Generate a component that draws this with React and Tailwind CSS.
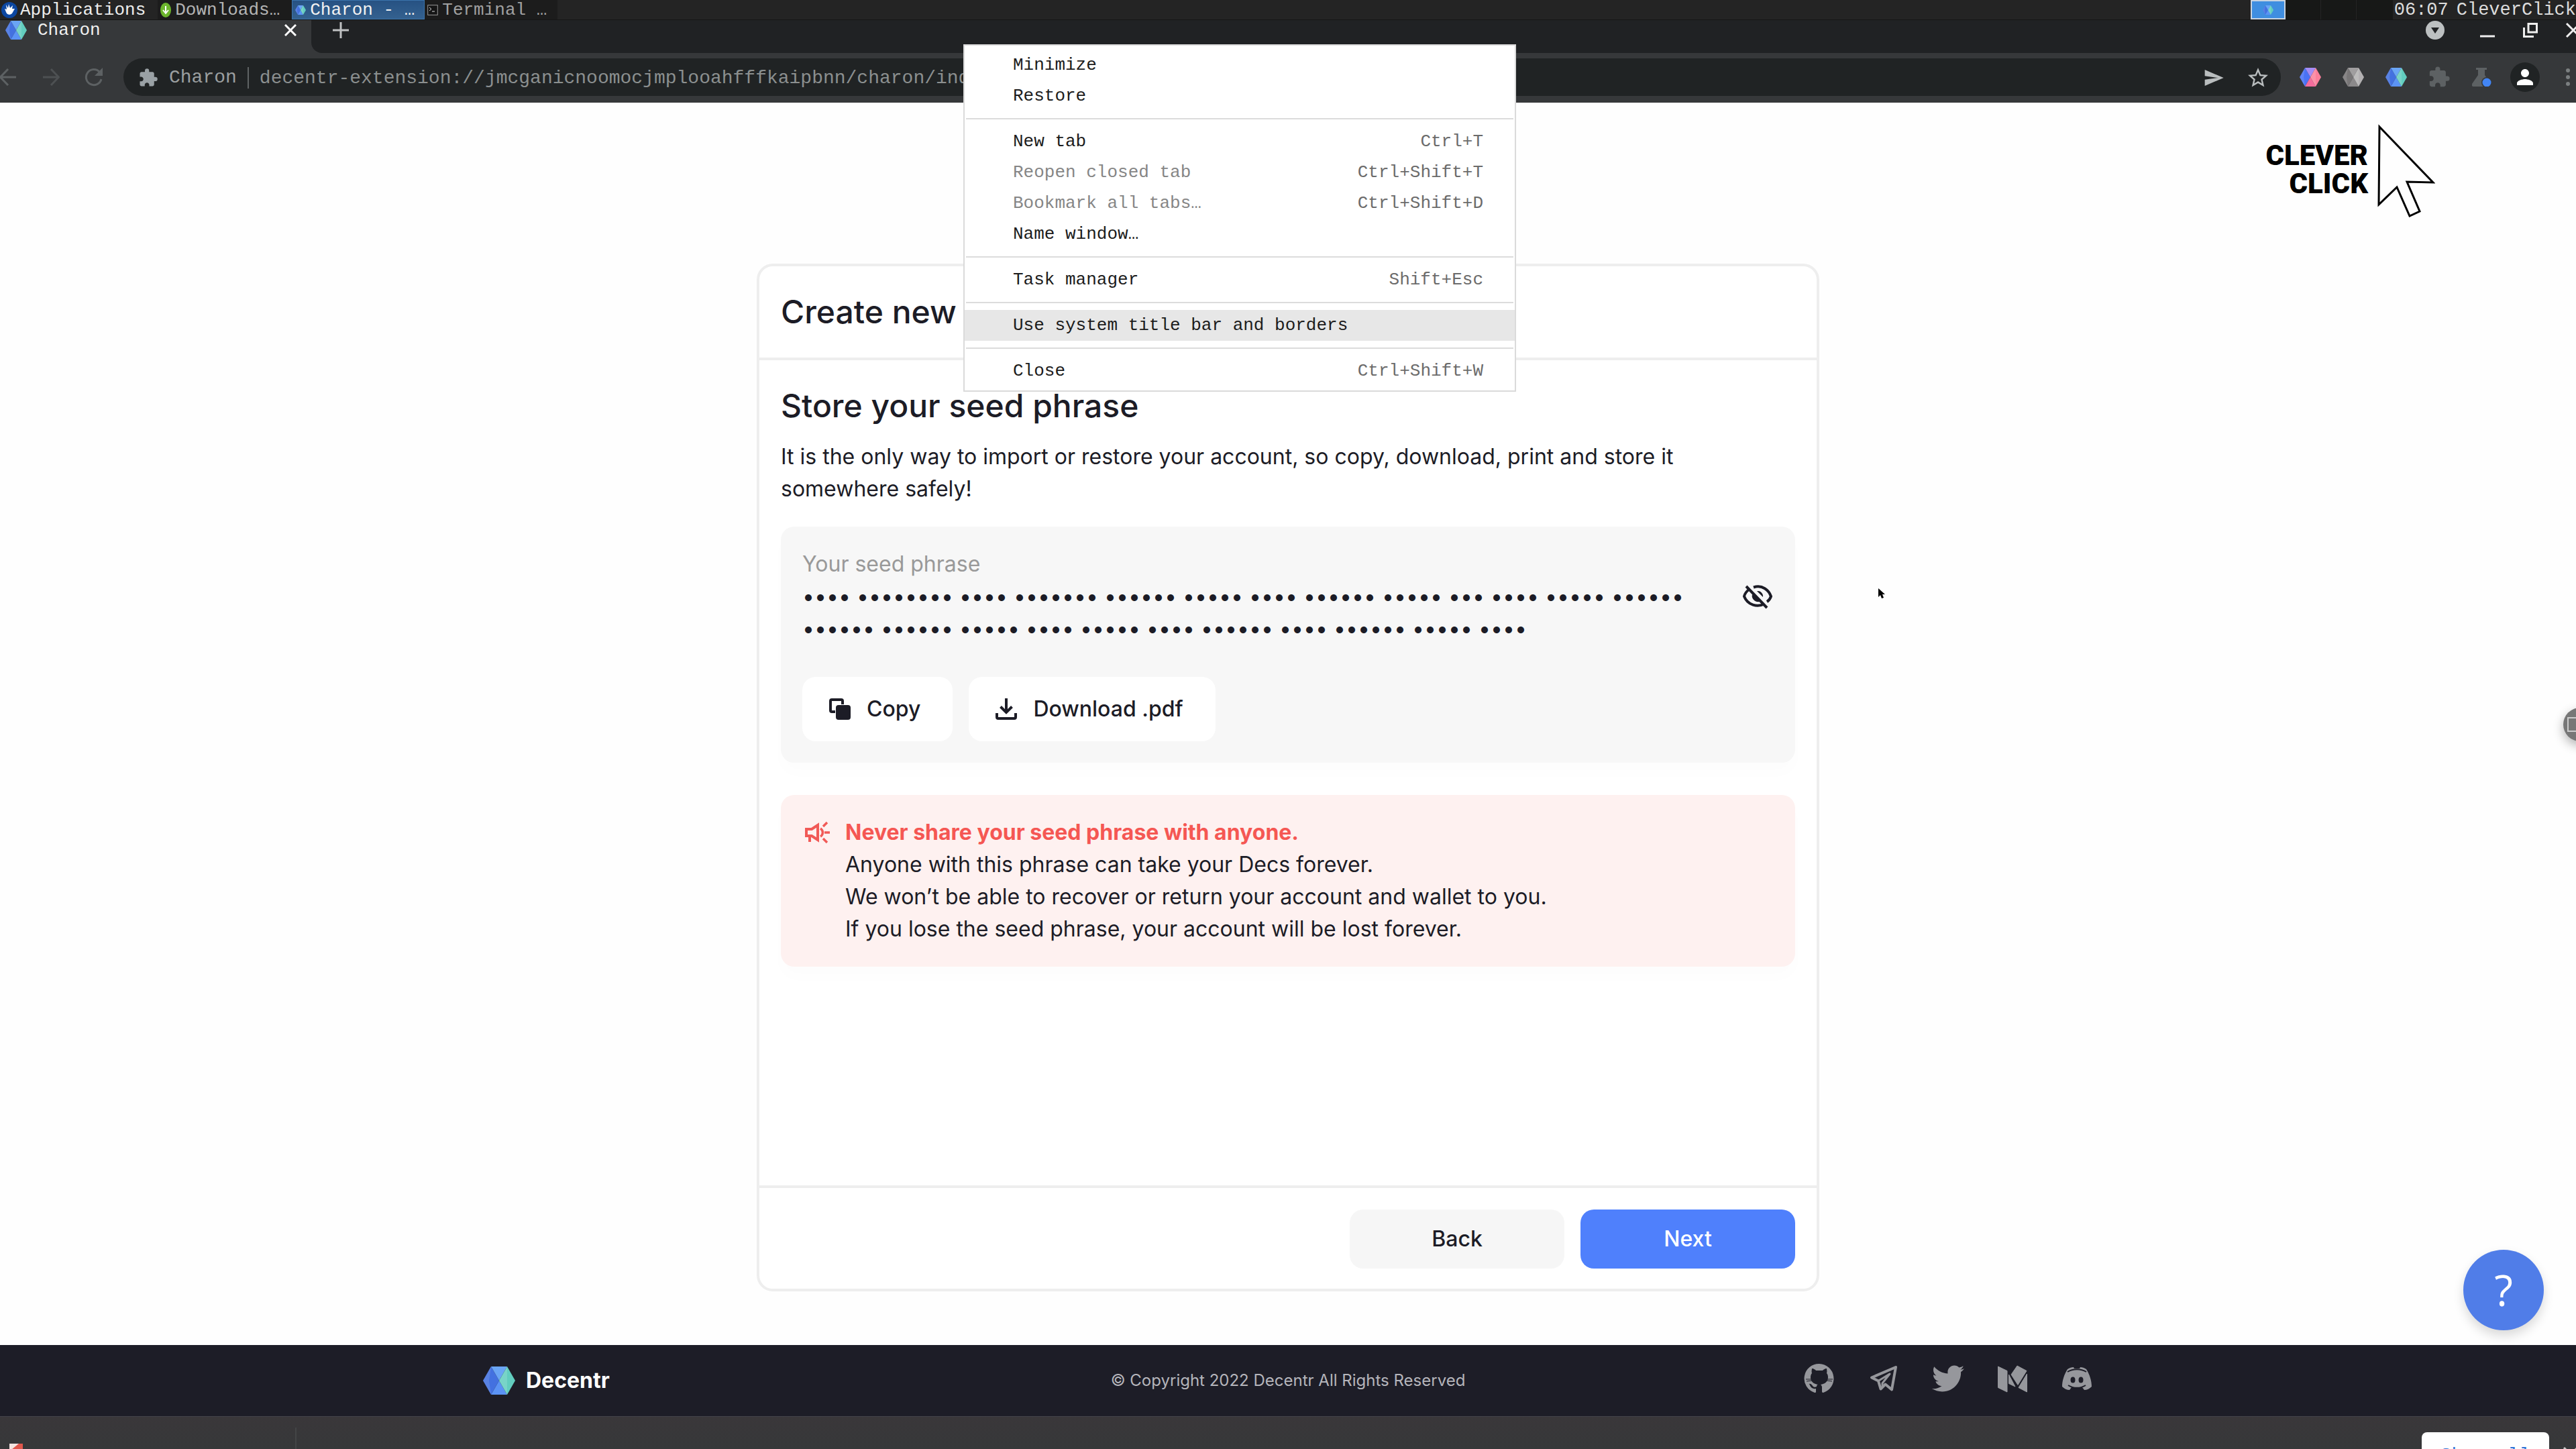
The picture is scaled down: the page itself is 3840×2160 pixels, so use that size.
import { FaTwitter } from 'react-icons/fa';
import { MdExtension, MdPerson, MdSend, MdStarBorder } from 'react-icons/md';

const menuGroups = [
  [{ label: 'Minimize' }, { label: 'Restore' }],
  [
    { label: 'New tab', keys: 'Ctrl+T' },
    { label: 'Reopen closed tab', keys: 'Ctrl+Shift+T', disabled: true },
    { label: 'Bookmark all tabs…', keys: 'Ctrl+Shift+D', disabled: true },
    { label: 'Name window…' },
  ],
  [{ label: 'Task manager', keys: 'Shift+Esc' }],
  [{ label: 'Use system title bar and borders', active: true }],
  [{ label: 'Close', keys: 'Ctrl+Shift+W' }],
];

const seedLines = [
  [4, 8, 4, 7, 6, 5, 4, 6, 5, 3, 4, 5, 6],
  [6, 6, 5, 4, 5, 4, 6, 4, 6, 5, 4],
];

const blueHex = ['#4371e0', '#6aa5f5', '#5b93f5', '#62cdbf'];
const pinkHex = ['#4a72f5', '#a58cf5', '#f46c9c', '#fb7f9b'];
const grayHex = ['#787677', '#a09e9f', '#8b898a', '#b3b1b2'];

function Hexagon({ colors = blueHex, className }) {
  return (
    <svg viewBox="0 0 48 42" preserveAspectRatio="none" className={className}>
      <path d="M12 0 24 21 12 42 0 21Z" fill={colors[0]} />
      <path d="M0 21 12 0 9 21 12 42Z" fill="#fff" opacity=".12" />
      <path d="M12 0H36L24 21Z" fill={colors[1]} />
      <path d="M12 42H36L24 21Z" fill={colors[2]} />
      <path d="M36 0 48 21 36 42 24 21Z" fill={colors[3]} />
      <path d="M36 0 24 21 36 42Z" fill="#fff" opacity=".14" />
    </svg>
  );
}

function TaskBar() {
  return (
    <div className="flex h-[30px] shrink-0 items-stretch border-b border-[#151515] bg-[#242424] text-[26px] leading-[30px] text-[#b4b4b4]">
      <button className="flex items-center gap-1 pl-0.5 pr-[18px] text-[#ececec]">
        <svg viewBox="0 0 24 24" className="size-6">
          <circle cx="12" cy="12" r="12" fill="#0c47a1" />
          <path
            d="M5 10l3 1-1-7 3 5 1-6 2 6 4-4-1 5 4 0-4 7c-3 3-8 2-9-2z"
            fill="#fff"
          />
        </svg>
        Applications
      </button>
      <button className="flex items-center gap-1.5 bg-[#1c1c1c] pl-1 pr-[18px]">
        <svg viewBox="0 0 16 24" className="h-6 w-4">
          <ellipse cx="8" cy="12" rx="8" ry="11" fill="#6cb52d" />
          <path d="M8 6v11M4 12l4 5 4-5" stroke="#fff" strokeWidth="2" fill="none" />
        </svg>
        Downloads…
      </button>
      <button className="flex items-center gap-1.5 border border-[#3b74ac] bg-linear-to-b from-[#275283] to-[#34618f] pl-1 pr-3.5 text-[#f2f2f2]">
        <Hexagon className="h-3.5 w-4" />
        Charon - …
      </button>
      <button className="flex items-center gap-1.5 bg-[#1c1c1c] px-1 pr-4 text-[#a0a0a0]">
        <svg viewBox="0 0 16 16" className="size-4">
          <rect x=".7" y=".7" width="14.600" height="14.600" fill="#151515" stroke="#999" />
          <path d="M3 4l3 2.500-3 2.500M7 10h4" stroke="#ddd" fill="none" />
        </svg>
        Terminal …
      </button>
      <div className="flex-1" />
      <div className="flex w-[212px] bg-[#171817]">
        <div className="flex w-[52px] items-center justify-center border-2 border-[#c8d4e0] bg-[#3f8ee0]">
          <Hexagon className="h-3.5 w-4" />
        </div>
        <div className="w-[53px] border-r border-[#242424]" />
        <div className="w-[53px] border-r border-[#242424]" />
      </div>
      <div className="flex gap-3 pl-0.5 text-[27px] text-[#dcdcdc]">
        <span>06:07</span>
        <span>CleverClick</span>
      </div>
    </div>
  );
}

function TabStrip() {
  return (
    <div className="flex h-[49px] shrink-0 bg-[#36383a]">
      <div className="flex h-[30px] w-[464px] items-center pl-2 pr-[22px] text-[26px] leading-[30px] text-[#f0f0f0]">
        <Hexagon className="h-7 w-8" />
        <span className="flex-1 pl-4">Charon</span>
        <button aria-label="Close tab">
          <svg viewBox="0 0 18 18" className="size-[18px]" stroke="#fff" strokeWidth="3">
            <path d="M1 1l16 16M17 1 1 17" />
          </svg>
        </button>
      </div>
      <div className="flex flex-1 overflow-hidden rounded-bl-2xl bg-[#202224] pl-8">
        <button aria-label="New tab" className="h-[30px]">
          <svg viewBox="0 0 24 24" className="size-6" stroke="#bfc1c2" strokeWidth="3">
            <path d="M12 0v24M0 12h24" />
          </svg>
        </button>
        <div className="flex-1" />
        <div className="-mr-7 flex h-[30px] items-center">
          <button aria-label="Search tabs" className="mr-8">
            <svg viewBox="0 0 28 28" className="size-7">
              <circle cx="14" cy="14" r="14" fill="#bcc0c1" />
              <path d="M8 10h12l-6 9z" fill="#202224" />
            </svg>
          </button>
          <button aria-label="Minimize window" className="flex w-16 justify-center">
            <svg viewBox="0 0 24 24" className="size-6">
              <path d="M1 21h22" stroke="#eee" strokeWidth="3" />
            </svg>
          </button>
          <button aria-label="Restore window" className="flex w-16 justify-center">
            <svg viewBox="0 0 24 24" className="size-6" stroke="#eee" strokeWidth="3" fill="none">
              <path d="M9 2.500h12.500V15H9zM2.500 8v13.500H17" />
            </svg>
          </button>
          <button aria-label="Close window" className="flex w-16 justify-center">
            <svg viewBox="0 0 24 24" className="size-6" stroke="#eee" strokeWidth="3">
              <path d="M2 2l20 20M22 2 2 22" />
            </svg>
          </button>
        </div>
      </div>
    </div>
  );
}

function ToolButton({ label, children }) {
  return (
    <button aria-label={label} className="flex w-16 shrink-0 items-center justify-center text-[#5d6163]">
      {children}
    </button>
  );
}

function Toolbar() {
  return (
    <div className="h-[74px] shrink-0 overflow-hidden bg-[#36383a] pb-2.5 pt-2">
      <div className="-mx-5 flex h-14">
        <ToolButton label="Back">
          <svg viewBox="0 0 26 26" className="size-[26px]" stroke="currentColor" strokeWidth="3" fill="none">
            <path d="M25 13H2M13 1 1.500 13 13 25" />
          </svg>
        </ToolButton>
        <ToolButton label="Forward">
          <svg viewBox="0 0 26 26" className="size-[26px] text-[#4d5052]" stroke="currentColor" strokeWidth="3" fill="none">
            <path d="M1 13h23M13 1l11.500 12L13 25" />
          </svg>
        </ToolButton>
        <ToolButton label="Reload">
          <svg viewBox="0 0 28 28" className="size-7">
            <path d="M22.500 6.500A11.500 11.500 0 1 0 25 17" stroke="currentColor" strokeWidth="3" fill="none" />
            <path d="M27 0v12H15z" fill="currentColor" />
          </svg>
        </ToolButton>
        <div className="mx-3 flex flex-1 items-center rounded-full bg-[#202324] pl-[22px] pr-4 pt-0.5 text-[28px] leading-8 text-[#9b9fa0]">
          <MdExtension className="size-[30px] text-[#9aa1a5]" />
          <span className="pl-4">Charon</span>
          <span className="mx-4 h-8 w-0.5 bg-[#5f6364]" />
          <input
            aria-label="Address"
            readOnly
            value="decentr-extension://jmcganicnoomocjmplooahfffkaipbnn/charon/index.html"
            className="flex-1 bg-transparent pt-0.5 text-[#8b8f8f] outline-none"
          />
          <button aria-label="Send" className="mr-8">
            <MdSend className="size-8 text-[#b9bdbe]" />
          </button>
          <button aria-label="Bookmark">
            <MdStarBorder className="size-9 text-[#b9bdbe]" />
          </button>
        </div>
        <ToolButton label="Decentr pink">
          <Hexagon colors={pinkHex} className="h-7 w-8" />
        </ToolButton>
        <ToolButton label="Decentr inactive">
          <Hexagon colors={grayHex} className="h-7 w-8" />
        </ToolButton>
        <ToolButton label="Decentr">
          <Hexagon className="h-7 w-8" />
        </ToolButton>
        <ToolButton label="Extensions">
          <MdExtension className="size-[34px]" />
        </ToolButton>
        <ToolButton label="Experiments">
          <svg viewBox="0 0 30 28" className="h-7 w-[30px]">
            <path d="M6 0h16v3h-3v8l9 13c1 2 0 4-2 4H2c-2 0-3-2-2-4l9-13V3H6z" fill="currentColor" />
            <circle cx="22" cy="22" r="8" fill="#36383a" />
            <circle cx="22" cy="22" r="6.500" fill="#4285f4" />
          </svg>
        </ToolButton>
        <ToolButton label="Profile">
          <span className="flex size-11 items-center justify-center rounded-full bg-[#202324]">
            <MdPerson className="size-9 text-white" />
          </span>
        </ToolButton>
        <ToolButton label="Browser menu">
          <svg viewBox="0 0 6 26" className="h-[26px] w-1.5" fill="#7b7f80">
            <circle cx="3" cy="3" r="3" />
            <circle cx="3" cy="13" r="3" />
            <circle cx="3" cy="23" r="3" />
          </svg>
        </ToolButton>
      </div>
    </div>
  );
}

function ContextMenu() {
  return (
    <div className="absolute left-[1436px] top-[66px] w-[824px] border-2 border-[#dadada] bg-white py-1.5 text-[26px] leading-[46px] text-[#1c1c1c]">
      {menuGroups.map((group, i) => (
        <div key={group[0].label}>
          {i > 0 && (
            <div className="flex h-[22px] items-center px-0.5">
              <hr className="w-full border-t-2 border-[#dcdcdc]" />
            </div>
          )}
          {group.map((item) => (
            <button
              key={item.label}
              disabled={item.disabled}
              className={`flex h-[46px] w-full justify-between px-[72px] pr-[47px] ${
                item.active ? 'bg-[#e7e7e7]' : ''
              } ${item.disabled ? 'text-[#868686]' : ''}`}
            >
              <span>{item.label}</span>
              <span className="text-[#6b6b6b]">{item.keys}</span>
            </button>
          ))}
        </div>
      ))}
    </div>
  );
}

function Brand() {
  return (
    <div className="absolute right-[210px] top-8 flex font-['Liberation_Sans_Narrow','Roboto',sans-serif]">
      <div className="pt-[26px] text-right text-[42px] font-black leading-[42px] text-black">
        <p>CLEVER</p>
        <p>CLICK</p>
      </div>
      <svg viewBox="0 0 88 140" className="ml-3 h-[140px] w-[88px]" fill="none" stroke="#000" strokeWidth="3">
        <path d="M5 4 85 87 46 86 65 130 50 137 31 94 4 120Z" />
      </svg>
    </div>
  );
}

function SeedBox() {
  return (
    <div className="rounded-[20px] bg-[#f7f7f7] p-8 shadow-[0_16px_24px_rgba(0,0,0,0.01)]">
      <div className="flex items-center justify-between">
        <div>
          <p className="text-[#999]">Your seed phrase</p>
          {seedLines.map((line, i) => (
            <p key={i}>{line.map((n) => '•'.repeat(n)).join(' ')}</p>
          ))}
        </div>
        <button aria-label="Show seed phrase">
          <svg viewBox="0 0 48 40" className="h-10 w-12" fill="none" stroke="#1c1c26" strokeWidth="4">
            <path d="M18 6.500C31 2 41 11 44 20c-1 3-3 6-6 8M12 9C8 12 5 15 4 20c5 13 20 17 30 11" />
            <path d="M16 17a9 9 0 0 0 13 10zM23 12a8 8 0 0 1 9 9z" fill="#1c1c26" stroke="none" />
            <path d="M7 5l31 32" />
          </svg>
        </button>
      </div>
      <div className="mt-12 flex gap-6 font-medium">
        <button className="flex h-24 items-center gap-6 rounded-[20px] bg-white pl-10 pr-12">
          <svg viewBox="0 0 32 32" className="size-8">
            <path d="M20 9V4a2 2 0 0 0-2-2H4a2 2 0 0 0-2 2v14a2 2 0 0 0 2 2h5" stroke="#1c1c26" strokeWidth="4" fill="none" />
            <rect x="10" y="10" width="22" height="22" rx="4" fill="#1c1c26" />
          </svg>
          Copy
        </button>
        <button className="flex h-24 items-center gap-6 rounded-[20px] bg-white pl-10 pr-12">
          <svg viewBox="0 0 32 32" className="size-8" stroke="#1c1c26" strokeWidth="4" fill="none">
            <path d="M16 0v20M7.500 12.500 16 21l8.500-8.500M2 22v6a2 2 0 0 0 2 2h24a2 2 0 0 0 2-2v-6" />
          </svg>
          Download .pdf
        </button>
      </div>
    </div>
  );
}

function Warning() {
  return (
    <div className="mt-12 flex gap-5 rounded-[20px] bg-[#fef1f0] p-8 shadow-[0_16px_24px_rgba(0,0,0,0.01)]">
      <svg viewBox="0 0 44 40" className="mt-1 h-10 w-11" fill="none" stroke="#f15a57" strokeWidth="4">
        <path d="M6 15h8l9-6v22l-9-6H6zM11 25v9" />
        <path d="M27 14a7 7 0 0 1 0 12M33 20h8M31 11l6-6M31 29l6 6" strokeWidth="3.500" />
      </svg>
      <div>
        <p className="font-bold text-[#f55753]">Never share your seed phrase with anyone.</p>
        <p>Anyone with this phrase can take your Decs forever.</p>
        <p>We won’t be able to recover or return your account and wallet to you.</p>
        <p>If you lose the seed phrase, your account will be lost forever.</p>
      </div>
    </div>
  );
}

function Card() {
  return (
    <section className="mx-auto flex w-full max-w-[1584px] flex-1 flex-col rounded-3xl border-4 border-[#eeeeee] bg-white text-[32px] leading-[48px]">
      <header className="border-b-4 border-[#eeeeee] p-8">
        <h1 className="text-[48px] font-medium leading-[72px]">Create new</h1>
      </header>
      <div className="flex-1 p-8">
        <h2 className="text-[48px] font-medium leading-[72px]">Store your seed phrase</h2>
        <p className="mb-8 mt-4 max-w-[1400px]">
          It is the only way to import or restore your account, so copy, download, print and store it somewhere safely!
        </p>
        <SeedBox />
        <Warning />
      </div>
      <footer className="flex justify-end gap-6 border-t-4 border-[#eeeeee] px-8 pb-[30px] pt-8 font-medium">
        <button className="h-[88px] w-[320px] rounded-[20px] bg-[#f6f6f6]">Back</button>
        <button className="h-[88px] w-[320px] rounded-[20px] bg-[#4f80fc] text-white">Next</button>
      </footer>
    </section>
  );
}

function SiteFooter() {
  return (
    <footer className="h-[106px] shrink-0 bg-[#1d1d27] font-['Inter',sans-serif]">
      <div className="mx-auto flex h-full max-w-[2400px] items-center justify-between">
        <a href="#home" className="flex w-[480px] items-center gap-4 text-[32px] font-bold leading-10 text-white">
          <Hexagon className="h-[42px] w-12" />
          Decentr
        </a>
        <p className="text-[24px] leading-8 text-[#b5b5bb]">© Copyright 2022 Decentr All Rights Reserved</p>
        <nav className="flex w-[480px] justify-end gap-12 pb-1.5 text-[#96979c]">
          <a href="#github" aria-label="GitHub">
            <svg viewBox="0 0 48 48" className="size-12">
              <path d="M24 2a22 22 0 0 0-7 43c2 .5 2-1 2-2v-4c-6 1-8-3-9-5 0-1-2-2-1-2 3-1 4 2 6 4 1 1 3 1 5 0 0-2 1-3 2-3-6-1-11-4-11-11 0-3 1-5 2-6-1-3 0-5 0-7 3 0 5 2 6 3h10c1-1 3-3 6-3 0 2 1 4 0 7 1 1 2 3 2 6 0 7-5 10-11 11 2 2 2 3 2 5v5c0 1 0 2 2 2A22 22 0 0 0 24 2z" fill="currentColor" />
              <path d="M4 25h9M5 28l8-1M35 25h9M35 27l8 1" stroke="#1d1d27" />
            </svg>
          </a>
          <a href="#telegram" aria-label="Telegram">
            <svg viewBox="0 0 48 48" className="size-12" fill="none" stroke="currentColor" strokeWidth="4" strokeLinejoin="round">
              <path d="M42 7 6 22.500l10 5 3.500 12 7-7 9.500 8z" />
              <path d="M16 27.500 33 17 22 31v6" strokeWidth="3" />
            </svg>
          </a>
          <a href="#twitter" aria-label="Twitter">
            <FaTwitter className="size-12" />
          </a>
          <a href="#medium" aria-label="Medium">
            <svg viewBox="0 0 48 48" className="size-12" fill="currentColor" stroke="currentColor" strokeLinejoin="round">
              <path d="M2.500 6 16 12.500V44L2.500 37.500zM18.500 18 28 36l-9.500-4.500zM31 5l14 7.500-13 21-10-15.500zM45.500 17v27l-12.500-6.500z" />
            </svg>
          </a>
          <a href="#discord" aria-label="Discord">
            <svg viewBox="0 0 48 48" className="size-12">
              <path d="M10 10c3-2 6-3 9-3l1 2h8l1-2c3 0 6 1 9 3 5 8 8 17 8 26-3 3-7 5-11 5l-3-4H16l-3 4c-4 0-8-2-11-5 0-9 3-18 8-26z" fill="currentColor" />
              <path d="M10 14c8-5 20-5 28 0M11 34c8 5 18 5 26 0" stroke="#1d1d27" strokeWidth="2" fill="none" />
              <ellipse cx="18" cy="26" rx="3.500" ry="4.500" fill="#1d1d27" />
              <ellipse cx="30" cy="26" rx="3.500" ry="4.500" fill="#1d1d27" />
            </svg>
          </a>
        </nav>
      </div>
    </footer>
  );
}

function DownloadBar() {
  return (
    <div className="flex h-[49px] shrink-0 items-start overflow-hidden border-t border-[#43434a] bg-linear-to-b from-[#3a373a] to-[#363839] text-[28px] leading-8">
      <div className="mt-4 flex h-20 w-[442px] items-start border-r-2 border-[#434546] pl-3.5 pt-6 text-[#f0f0f0]">
        <svg viewBox="0 0 20 26" className="h-[26px] w-5">
          <path d="M0 0h20v26H0z" fill="#f4e4e0" />
          <path d="M3 9 14 0h6v26l-6-10z" fill="#e0574c" />
        </svg>
        <span className="pl-8 pt-1.5">seed-phrase.pdf</span>
      </div>
      <div className="flex-1" />
      <button className="mt-[23px] h-[70px] w-[190px] shrink-0 rounded-lg bg-white text-[#2f74d8]">Show all</button>
      <button aria-label="Close downloads" className="ml-5 mr-[-4px] mt-11 shrink-0">
        <svg viewBox="0 0 24 24" className="size-6" stroke="#c8c8c8" strokeWidth="3">
          <path d="M2 2l20 20M22 2 2 22" />
        </svg>
      </button>
    </div>
  );
}

export default function App() {
  return (
    <div className="relative flex h-screen flex-col overflow-hidden bg-[#fefefe] font-['Liberation_Mono',monospace]">
      <TaskBar />
      <TabStrip />
      <Toolbar />
      <main className="relative flex flex-1 flex-col pb-20 pt-60 font-['Inter',sans-serif] text-[#1c1c26]">
        <Brand />
        <Card />
        <svg viewBox="0 0 10 16" className="absolute left-[2800px] top-[724px] h-4 w-2.5">
          <path d="M0 0v13l3-3 2 5 3-1-2-5h4z" />
        </svg>
        <div className="absolute right-[-31px] top-[902px] flex size-[50px] items-center rounded-full bg-[#777] pl-1.5 shadow-[0_6px_16px_rgba(0,0,0,0.3)]">
          <span className="h-[22px] w-8 border-2 border-[#ccc]" />
        </div>
        <button
          aria-label="Help"
          className="absolute bottom-[22px] right-12 size-[120px] rounded-full bg-[#507de8] font-['Open_Sans',sans-serif] text-[64px] text-white shadow-[0_8px_16px_rgba(0,0,0,0.15)]"
        >
          ?
        </button>
      </main>
      <SiteFooter />
      <DownloadBar />
      <ContextMenu />
    </div>
  );
}
